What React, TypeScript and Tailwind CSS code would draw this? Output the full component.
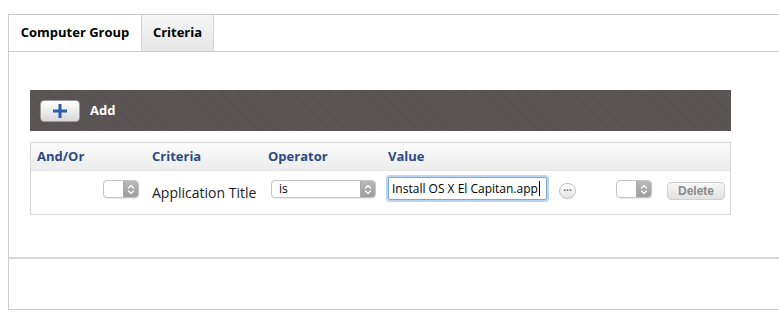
import React from "react";

function Chevrons() {
  return (
    <svg width="8" height="11" viewBox="0 0 8 11" fill="none">
      <path d="M1.5 4 L4 1.5 L6.5 4" stroke="#ffffff" strokeWidth="1.3" strokeLinecap="round" strokeLinejoin="round" />
      <path d="M1.5 7 L4 9.5 L6.5 7" stroke="#ffffff" strokeWidth="1.3" strokeLinecap="round" strokeLinejoin="round" />
    </svg>
  );
}

function MiniSelect({ width, label }: { width: number; label?: string }) {
  return (
    <div
      className="flex h-[18px] rounded-[4px] border border-[#c4c4c4] bg-white overflow-hidden shadow-[0_1px_1px_rgba(0,0,0,0.08)]"
      style={{ width }}
    >
      <div className="flex-1 flex items-center pl-[7px] text-[12px] text-black leading-none">{label}</div>
      <div className="w-[15px] flex items-center justify-center bg-[linear-gradient(#b9b9b9,#9c9c9c)] border-l border-[#a8a8a8]">
        <Chevrons />
      </div>
    </div>
  );
}

export default function App() {
  const font = { fontFamily: '"Open Sans", "Liberation Sans", sans-serif' };
  return (
    <div className="w-[779px] h-[325px] bg-white overflow-hidden pt-[14px] pl-[8px]" style={font}>
      <div className="w-[800px] h-[296px] border-l border-t border-b border-[#cccccc] flex flex-col">
        {/* tabs */}
        <div className="flex h-[37px] border-b border-[#cccccc]">
          <div className="w-[132px] flex items-center justify-center bg-white text-[13px] font-bold text-black pb-[1px]">
            Computer Group
          </div>
          <div className="w-[73px] flex items-center justify-center bg-[linear-gradient(#f6f6f6,#e6e6e6)] border-l border-r border-[#d2d2d2] text-[13px] font-bold text-black pb-[1px]">
            Criteria
          </div>
        </div>

        {/* content */}
        <div className="h-[205px] pl-[21px] pt-[38px]">
          <div className="w-[701px] h-[41px] flex items-center pl-[10px] bg-[repeating-linear-gradient(45deg,#5c5756_0px,#5c5756_2px,#555050_2px,#555050_3px)]">
            <div className="w-[40px] h-[22px] rounded-[4px] border border-[#9a9a9a] bg-[linear-gradient(#ffffff,#d8d8d8)] flex items-center justify-center shadow-[inset_0_1px_0_#fff]">
              <svg width="14" height="14" viewBox="0 0 14 14">
                <rect x="5.5" y="0" width="3" height="14" fill="#2d5da6" />
                <rect x="0" y="5.5" width="14" height="3" fill="#2d5da6" />
              </svg>
            </div>
            <span className="ml-[10px] text-[13px] font-bold text-white">Add</span>
          </div>

          <div className="mt-[11px] w-[701px] border border-[#d6d6d6]">
            <div className="grid grid-cols-[116px_116px_120px_1fr] h-[28px] bg-[linear-gradient(#fbfbfb,#ececec)] border-b border-[#e2e2e2] text-[13px] font-bold text-[#2c4a86]">
              <div className="pl-[6px] flex items-center pt-[1px]">And/Or</div>
              <div className="pl-[5px] flex items-center pt-[1px]">Criteria</div>
              <div className="pl-[5px] flex items-center pt-[1px]">Operator</div>
              <div className="pl-[5px] flex items-center pt-[1px]">Value</div>
            </div>
            <div className="grid grid-cols-[116px_116px_120px_1fr] h-[43px] bg-white">
              <div className="flex justify-end pr-[8px] pt-[9px]">
                <MiniSelect width={36} />
              </div>
              <div className="pl-[5px] pt-[13px] text-[14px] text-[#222222] leading-[18px] whitespace-nowrap">Application Title</div>
              <div className="pl-[8px] pt-[9px]">
                <MiniSelect width={105} label="is" />
              </div>
              <div className="pl-[5px] pt-[6px] flex items-start">
                <div className="w-[159px] h-[23px] border border-[#7ea6d6] rounded-[2px] shadow-[0_0_0_2px_#b9d5f3] flex items-center pl-[3px] text-[12px] text-black leading-none whitespace-nowrap overflow-hidden">
                  Install OS X El Capitan.app<span className="inline-block w-[1px] h-[15px] bg-black ml-[1px]" />
                </div>
                <div className="ml-[12px] mt-[6px] w-[17px] h-[16px] rounded-full border border-[#c2c2c2] bg-[linear-gradient(#ffffff,#e2e2e2)] flex items-center justify-center text-[10px] font-bold text-[#666666] leading-none pb-[3px]">
                  ···
                </div>
                <div className="ml-[40px] mt-[3px]">
                  <MiniSelect width={36} />
                </div>
                <div className="ml-[15px] mt-[5px] w-[58px] h-[18px] rounded-[4px] border border-[#d0d0d0] bg-[linear-gradient(#f7f7f7,#e1e1e1)] flex items-center justify-center text-[12px] font-bold text-[#8a8a8a]" style={{ fontFamily: '"Liberation Sans", Arial, sans-serif' }}>
                  Delete
                </div>
              </div>
            </div>
          </div>
        </div>

        <div className="border-t-2 border-[#d6d6d6]" />
      </div>
    </div>
  );
}
